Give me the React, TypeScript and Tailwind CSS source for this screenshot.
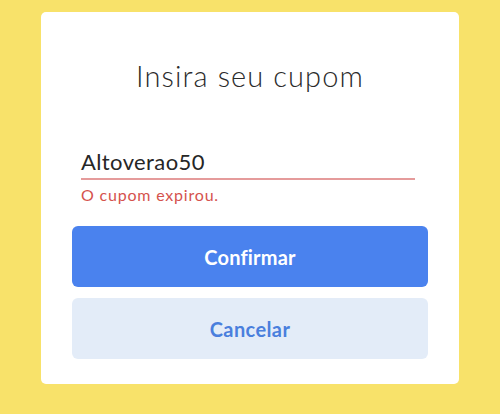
export default function App() {
  return (
    <div
      className="flex h-[414px] w-[500px] justify-center bg-[#f8e26a] pt-[12px]"
      style={{ fontFamily: "Lato, 'Open Sans', sans-serif" }}
    >
      <div className="flex h-[372px] w-[418px] flex-col rounded-[5px] bg-white">
        <h1 className="mt-[49px] text-center text-[29px] font-light leading-[29px] tracking-[1.1px] text-[#2b2b2b]">
          Insira seu cupom
        </h1>

        <div className="ml-[40px] mr-[44px] mt-[61px]">
          <div className="border-b-2 border-[#e59b9b] pb-[5px] text-[22px] leading-[22px] tracking-[0.4px] text-[#262626]">
            Altoverao50
          </div>
          <p className="mt-[7px] text-[16px] leading-[16px] tracking-[0.8px] text-[#d5524d]">O cupom expirou.</p>
        </div>

        <div className="mx-[31px] mt-[23px] flex flex-col gap-[11px]">
          <button
            type="button"
            className="h-[61px] w-full rounded-[6px] bg-[#4a82ee] text-[20px] font-bold tracking-[0.2px] text-white"
          >
            Confirmar
          </button>
          <button
            type="button"
            className="h-[61px] w-full rounded-[6px] bg-[#e3ecf8] text-[20px] font-bold tracking-[0.4px] text-[#4a7fdd]"
          >
            Cancelar
          </button>
        </div>
      </div>
    </div>
  );
}
